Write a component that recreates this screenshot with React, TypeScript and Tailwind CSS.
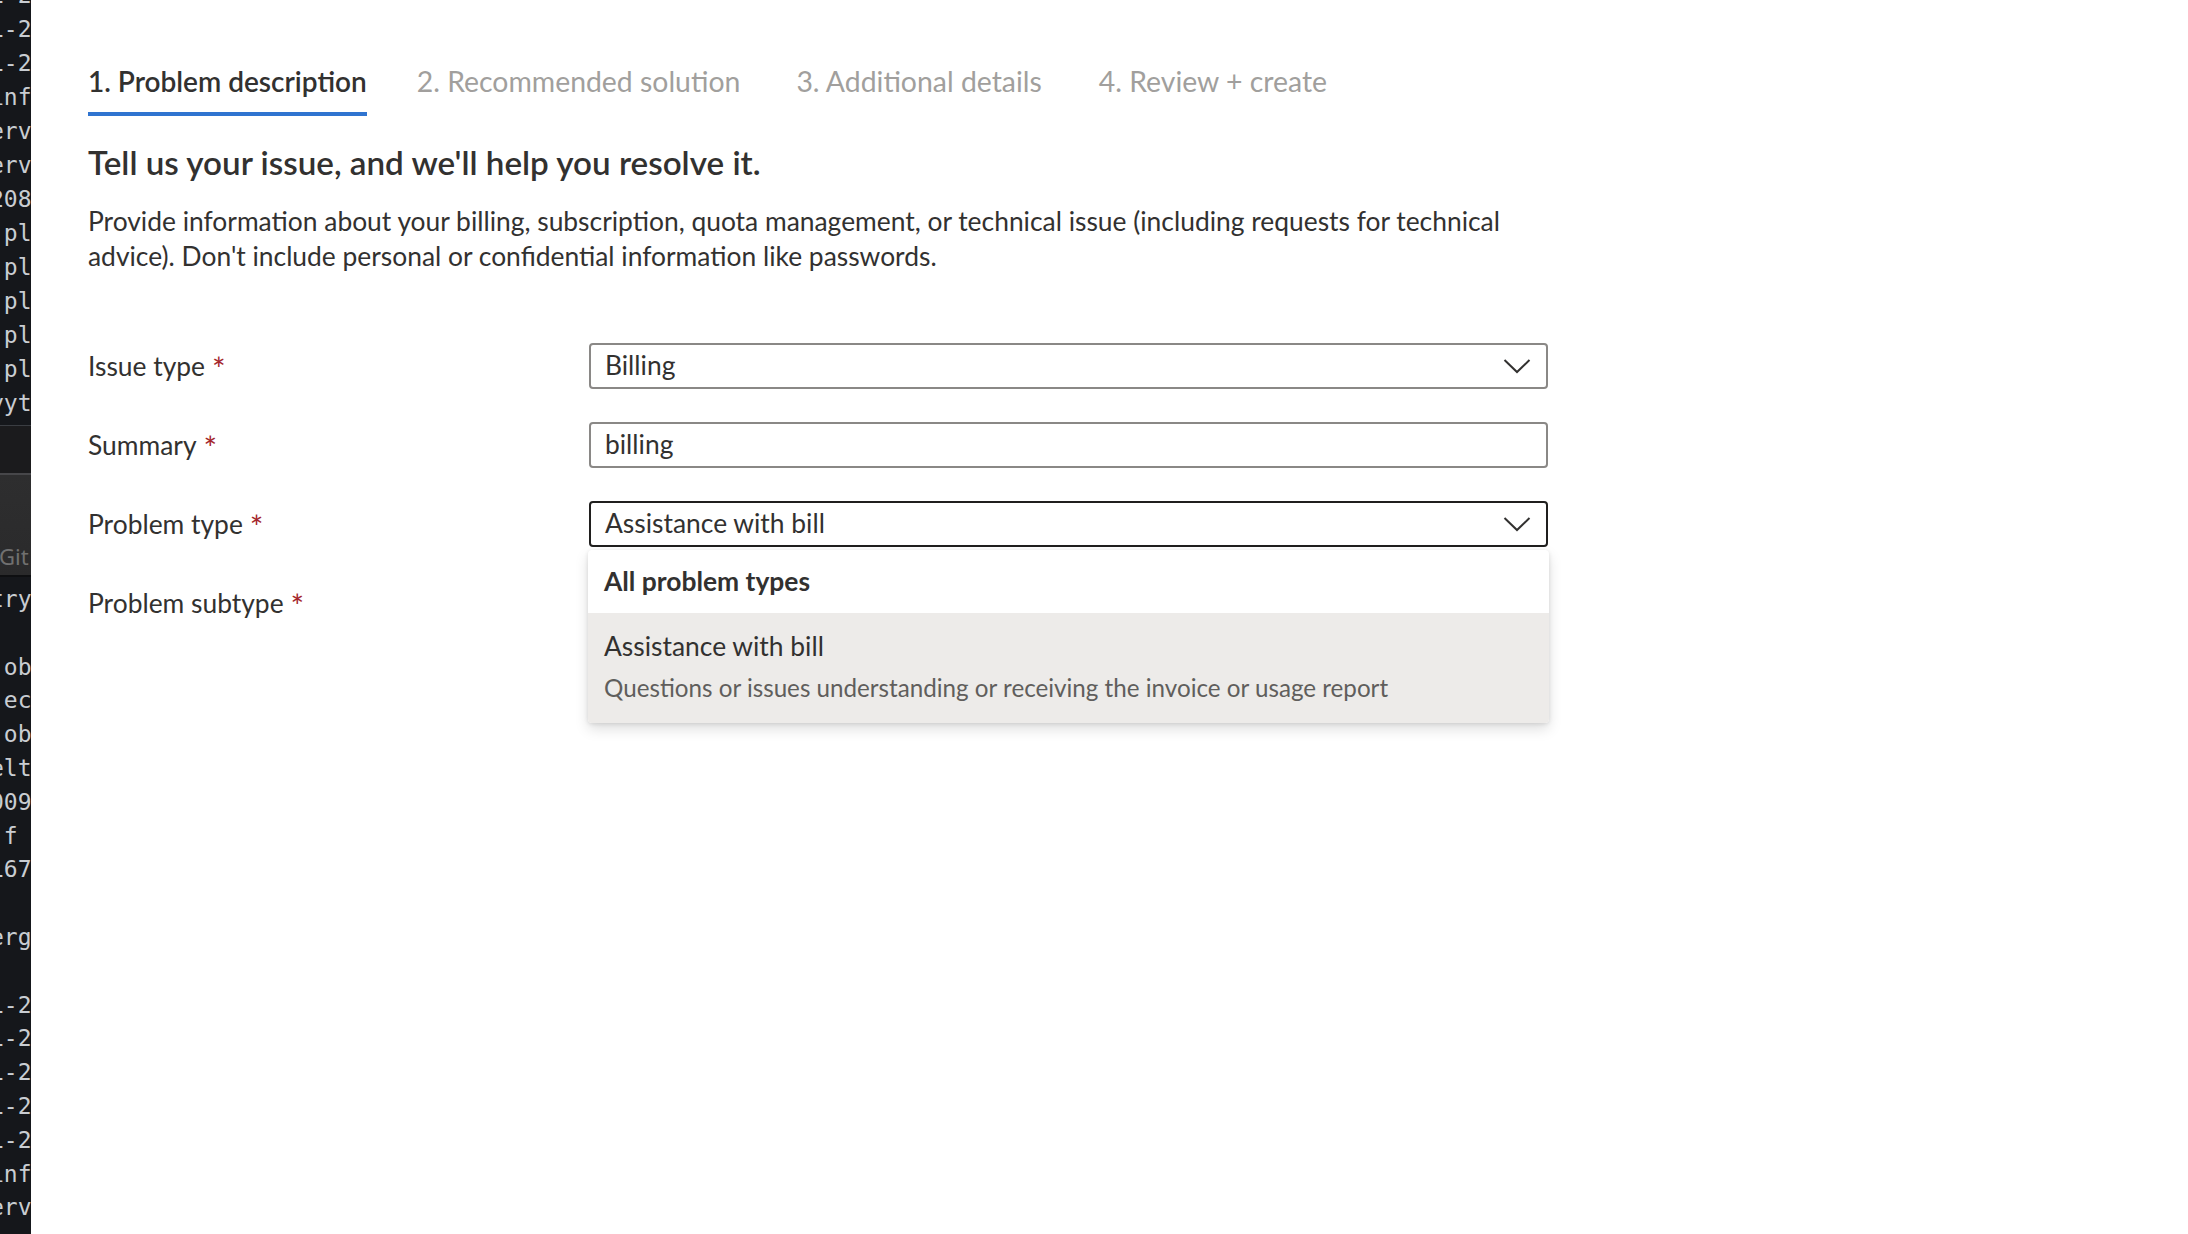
import React from 'react';

const topLines = ['1-2', '1-2', '1-2', 'inf', 'erv', 'erv', '208', ' pl', ' pl', ' pl', ' pl', ' pl', 'yyt'];
const bottomLines = ['try', '', ' ob', ' ec', ' ob', 'elt', '009', ' f', '167', '', 'erg', '', '1-2', '1-2', '1-2', '1-2', '1-2', 'inf', 'erv'];

const Chevron: React.FC = () => (
  <svg width="28" height="16" viewBox="0 0 28 16" fill="none" className="shrink-0">
    <polyline points="1.5,2 14,14 26.5,2" stroke="#323130" strokeWidth="2" strokeLinejoin="miter" />
  </svg>
);

const Label: React.FC<{ text: string }> = ({ text }) => (
  <div className="w-[501px] shrink-0 flex items-baseline text-[26.4px] leading-[34px] text-[#323130]">
    <span>{text}</span>
    <span className="ml-[7px] text-[32px] leading-[20px] text-[#a4262c] relative top-[5px]">*</span>
  </div>
);

const TerminalStrip: React.FC = () => (
  <aside className="w-[31px] shrink-0 h-full bg-[#15171b] overflow-hidden flex flex-col font-['DejaVu_Sans_Mono',monospace] text-[23px] text-[#c9cdd2] whitespace-pre">
    <div className="mt-[-22px]">
      {topLines.map((l, i) => (
        <div key={i} className="leading-[34px] h-[34px] ml-[-10px]">{l}</div>
      ))}
    </div>
    <div className="mt-[5px] h-[1px] bg-[#3a3d42]" />
    <div className="h-[47px] bg-[#1b1b1d]" />
    <div className="h-[2px] bg-[#47474a]" />
    <div className="h-[100px] bg-gradient-to-b from-[#2e2e2f] to-[#2a2a2b] flex items-end pb-[6px]">
      <span className="font-['Noto_Sans',sans-serif] text-[22px] leading-[26px] text-[#707070] ml-[-1px]">Git</span>
    </div>
    <div className="h-[2px] bg-[#0e0f11]" />
    <div className="pt-[6px]">
      {bottomLines.map((l, i) => (
        <div key={i} className="leading-[33.8px] h-[33.8px] ml-[-10px]">{l}</div>
      ))}
    </div>
  </aside>
);

const tabs = [
  { label: '1. Problem description', gap: 'mr-[50px]' },
  { label: '2. Recommended solution', gap: 'mr-[56px]' },
  { label: '3. Additional details', gap: 'mr-[57px]' },
  { label: '4. Review + create', gap: '' },
];

export default function App() {
  return (
    <div className="flex w-full h-[1234px] bg-white overflow-hidden font-['Lato',sans-serif]">
      <TerminalStrip />

      <main className="pl-[57px] pt-[61px] w-[1517px] shrink-0">
        {/* wizard steps */}
        <nav className="flex">
          {tabs.map((t, i) => (
            <div key={t.label} className={`flex flex-col ${t.gap}`}>
              <span
                className={
                  i === 0
                    ? 'text-[28px] leading-[40px] font-semibold text-[#323130]'
                    : 'text-[28.4px] leading-[40px] text-[#a19f9d]'
                }
              >
                {t.label}
              </span>
              <div className={i === 0 ? 'mt-[11px] h-[4px] bg-[#2f74d0]' : 'mt-[11px] h-[4px]'} />
            </div>
          ))}
        </nav>

        <h1 className="mt-[24px] text-[33.2px] leading-[44px] font-semibold text-[#323130]">
          Tell us your issue, and we'll help you resolve it.
        </h1>
        <p className="mt-[20px] w-[1460px] text-[26.4px] leading-[35px] text-[#323130]">
          Provide information about your billing, subscription, quota management, or technical issue (including
          requests for technical advice). Don't include personal or confidential information like passwords.
        </p>

        {/* form */}
        <div className="mt-[69px] w-[1460px] flex flex-col gap-[33px]">
          <div className="flex items-center">
            <Label text="Issue type" />
            <div className="flex-1 h-[46px] border-2 border-[#8a8886] rounded-[4px] flex items-center justify-between pl-[14px] pr-[15px] text-[26.4px] text-[#323130]">
              <span>Billing</span>
              <Chevron />
            </div>
          </div>

          <div className="flex items-center">
            <Label text="Summary" />
            <div className="flex-1 h-[46px] border-2 border-[#8a8886] rounded-[4px] flex items-center pl-[14px] text-[26.4px] text-[#323130]">
              billing
            </div>
          </div>

          <div className="flex items-center">
            <Label text="Problem type" />
            <div className="flex-1 relative">
              <div className="h-[46px] border-2 border-[#201f1e] rounded-[4px] flex items-center justify-between pl-[14px] pr-[15px] text-[26.4px] text-[#323130]">
                <span>Assistance with bill</span>
                <Chevron />
              </div>

              {/* open listbox */}
              <div className="absolute left-[-1px] right-[-1px] top-[49px] z-10 bg-white rounded-[4px] overflow-hidden shadow-[0_6px_14px_rgba(0,0,0,0.13),0_1px_4px_rgba(0,0,0,0.11)]">
                <div className="h-[63px] flex items-center px-[16px] text-[26.4px] font-bold text-[#323130]">
                  All problem types
                </div>
                <div className="bg-[#edebe9] px-[16px] pt-[16px] pb-[19px]">
                  <div className="text-[26.4px] leading-[34px] text-[#323130]">Assistance with bill</div>
                  <div className="mt-[9px] text-[24.2px] leading-[32px] text-[#605e5c]">
                    Questions or issues understanding or receiving the invoice or usage report
                  </div>
                </div>
              </div>
            </div>
          </div>

          <div className="flex items-center">
            <Label text="Problem subtype" />
            <div className="flex-1 h-[46px] border-2 border-[#8a8886] rounded-[4px]" />
          </div>
        </div>
      </main>
    </div>
  );
}
